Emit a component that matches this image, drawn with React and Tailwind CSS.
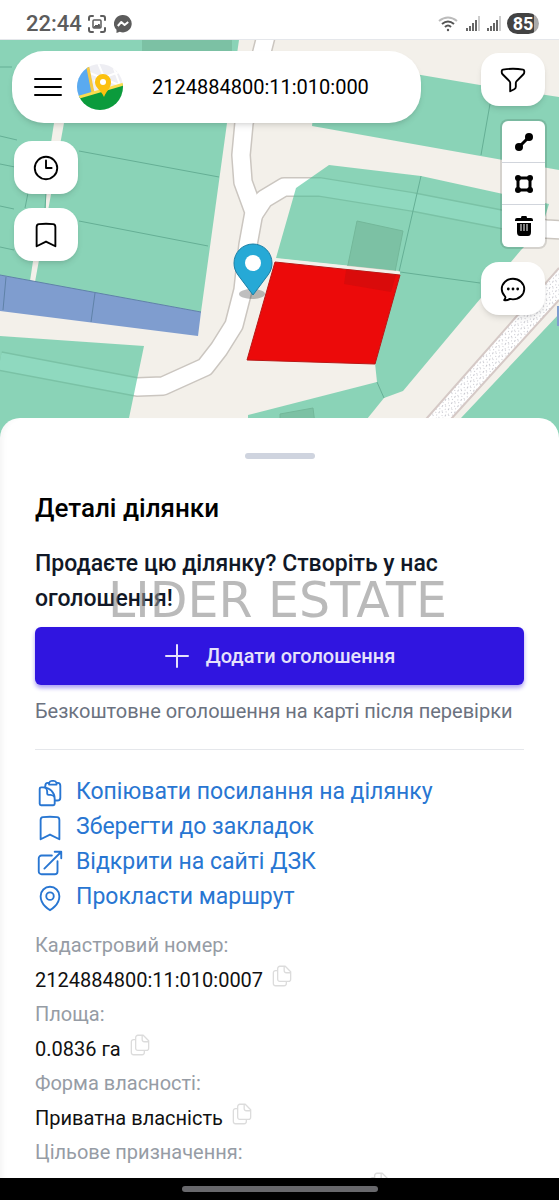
import React from 'react';
import {
    HiOutlineArrowTopRightOnSquare,
    HiOutlineBookmark,
    HiOutlineChatBubbleOvalLeftEllipsis,
    HiOutlineClipboardDocument,
    HiOutlineClock,
    HiOutlineFunnel,
    HiOutlineMapPin,
} from 'react-icons/hi2';

const links = [
    { icon: HiOutlineClipboardDocument, label: 'Копіювати посилання на ділянку' },
    { icon: HiOutlineBookmark, label: 'Зберегти до закладок' },
    { icon: HiOutlineArrowTopRightOnSquare, label: 'Відкрити на сайті ДЗК' },
    { icon: HiOutlineMapPin, label: 'Прокласти маршрут' },
];

const details = [
    { label: 'Кадастровий номер:', value: '2124884800:11:010:0007' },
    { label: 'Площа:', value: '0.0836 га' },
    { label: 'Форма власності:', value: 'Приватна власність' },
    { label: 'Цільове призначення:', value: '' },
];

const Signal = () => (
    <svg viewBox="0 0 14 15" className="w-[14px] h-[15px]" stroke="#666" strokeWidth="2">
        <path d="M1 15v-3M4 15v-5M7 15V7M10 15V4" />
        <path d="M13 15V0" stroke="#ccc" />
    </svg>
);

const StatusBar = () => (
    <header className="h-10 shrink-0 pt-2 pl-[26px] pr-5 flex items-center justify-between border-b border-gray-200 text-[#5c5c5c]">
        <div className="flex items-center">
            <span className="w-[62px] text-[22px] leading-6 font-medium">22:44</span>
            <svg viewBox="0 0 18 18" className="w-[18px] h-[18px]" fill="none" stroke="currentColor" strokeWidth="2" strokeLinecap="round">
                <path d="M1 5V3q0-2 2-2h2M13 1h2q2 0 2 2v2M17 13v2q0 2-2 2h-2M5 17H3q-2 0-2-2v-2" />
                <rect x="5" y="5" width="8" height="8" rx="1" strokeWidth="1.500" />
                <path d="M6 12l2-2 1 1 2-2 1 3z" fill="currentColor" strokeWidth="1" />
            </svg>
            <svg viewBox="0 0 18 18" className="w-[18px] h-[18px] ml-2">
                <path d="M9 0a8.700 8.700 0 1 1-3.200 16.800L2.500 18v-3.200A8.700 8.700 0 0 1 9 0z" fill="#5c5c5c" />
                <path d="M3.800 11l3.500-4 3.300 3 3.600-3" fill="none" stroke="#fff" strokeWidth="2" strokeLinejoin="round" />
            </svg>
        </div>
        <div className="flex items-center">
            <svg viewBox="0 0 20 16" className="w-5 h-4 mr-2" fill="none" stroke="#555" strokeWidth="2">
                <path d="M1 5q9-7 18 0" stroke="#bbb" />
                <path d="M4 8q6-5 12 0M7 11q3-3 6 0" />
                <circle cx="10" cy="14" r="1.200" fill="#555" stroke="none" />
            </svg>
            <Signal />
            <span className="w-[7px]" />
            <Signal />
            <span className="ml-[6px] w-8 h-[21px] rounded-full bg-[linear-gradient(to_right,#434343_85%,#aaa_85%)] text-white text-[18px] leading-[22px] font-bold text-center">
                85
            </span>
        </div>
    </header>
);

const ParcelMap = () => (
    <svg
        viewBox="0 40 559 410"
        preserveAspectRatio="xMidYMin slice"
        className="absolute inset-x-0 top-0 w-full h-[410px]"
        aria-hidden="true"
    >
        <defs>
            <pattern id="gravel" width="7" height="7" patternUnits="userSpaceOnUse" patternTransform="rotate(27)">
                <rect width="7" height="7" fill="#fff" />
                <path d="M1 1h1v1H1zM4 0h1v1H4zM3 3h1v1H3zM6 4h1v1H6zM0 5h1v1H0zM4 6h1v1H4z" fill="#c9c9d0" />
            </pattern>
        </defs>
        <rect y="40" width="559" height="410" fill="#f3f0ea" />

        {/* roads */}
        <g fill="none" strokeLinejoin="round">
            <g stroke="#cbc6c0" strokeWidth="20">
                <path d="M266 36L244 123 241 155 243 182 254 212 248 245 243 290 234 325 219 349 205 367 163 386 137 387 0 361" />
                <path d="M254 214L264 199 284 187 320 187 413 202 500 219 546 229 565 230" />
            </g>
            <g stroke="#fff" strokeWidth="17">
                <path d="M266 36L244 123 241 155 243 182 254 212 248 245 243 290 234 325 219 349 205 367 163 386 137 387 0 361" />
                <path d="M254 214L264 199 284 187 320 187 413 202 500 219 546 229 565 230" />
            </g>
        </g>
        <path d="M405 443L559 268V300L432 440Z" fill="url(#gravel)" />
        <path d="M405 443L559 268M432 440L559 300" fill="none" stroke="#d5c9c6" strokeWidth="2" />

        {/* buildings */}
        <g fill="#cfc4bb" stroke="#b8aaa2">
            <path d="M357 221L403 231 391 292 344 284Z" />
            <path d="M280 414L313 408 317 440H280Z" />
            <path d="M142 36H232V60H142Z" stroke="none" />
        </g>

        {/* parcels */}
        <g fill="#44c095" fillOpacity="0.6">
            <path d="M0 40H239L227 123 201 312 35 282 64 123H54L30 281 0 275Z" />
            <path d="M0 336L144 346 129 418 124 450H0Z" />
            <path d="M320 58L421 75 480 85 559 97V170L312 126Z" />
            <path d="M296 188L329 165 421 176 549 204 541 230 521 250 403 391 384 398 377 382 375 363 400 275 399 271 276 258Z" />
            <path d="M248 415L377 382 384 398 350 440H248Z" />
            <path d="M430 450L461 418 559 314V450Z" />
        </g>
        <path d="M27 193H46V208H27Z" fill="#8ad3b7" />
        <g fill="none" stroke="#65af95" strokeWidth="1">
            <path d="M79 151L219 177M79 221L208 246M0 136L17 140M0 164L15 167M0 206L14 209M0 247L14 250M0 67H12" />
            <path d="M28 193L25 208M46 193L45 208M490 104L481 155M421 176L399 272M400 272L480 283M377 382L384 398" />
        </g>
        <path d="M0 275L201 312 198 336 0 311Z" fill="#7f9dcf" />
        <path d="M0 275L201 312M6 277L3 310M95 293L91 322" fill="none" stroke="#5f82a8" />
        <path d="M557 306H559V326H557Z" fill="#7f9dcf" />
        <path d="M276 260L400 273" stroke="#f3f0ea" strokeWidth="3" />
        <path d="M275 262L400 275 375 364 247 360Z" fill="#ec0a0a" stroke="#b91816" strokeWidth="1" />
        <path d="M346 270L396 275 391 292 344 284Z" fill="#d90b0b" />

        {/* marker */}
        <ellipse cx="252" cy="294" rx="13" ry="5" fill="#000" opacity="0.25" />
        <path d="M253 295L238 275C235 271 234 267 234 263a19 19 0 0 1 38 0C272 267 271 271 268 275Z" fill="#26a9d6" stroke="#1c7fa5" strokeWidth="1" />
        <circle cx="253" cy="263" r="8" fill="#fff" />
    </svg>
);

const Logo = () => (
    <svg viewBox="0 0 48 48" className="w-12 h-12 shrink-0">
        <defs>
            <clipPath id="logo-clip">
                <circle cx="24" cy="24" r="23" />
            </clipPath>
        </defs>
        <g clipPath="url(#logo-clip)">
            <rect width="48" height="48" fill="#eeeef3" />
            <path d="M14 10L48 24M22 0L34 28M36 0L44 22M18 18L46 8" stroke="#fff" strokeWidth="2" />
            <path d="M0 0H12L18 30 0 36Z" fill="#5aaaf0" />
            <path d="M11 0L17 30" stroke="#f6c945" strokeWidth="3" />
            <path d="M0 35L48 21V48H0Z" fill="#0b9b3c" />
            <path d="M0 35L48 21" stroke="#fbdc4e" strokeWidth="3" />
            <path d="M28 34C25 27 19 25 19 19a8 8 0 0 1 16 0C35 25 31 27 28 34Z" fill="#fcc10f" />
            <circle cx="27" cy="19" r="3" fill="#fff" />
        </g>
    </svg>
);

const CopyIcon = () => (
    <svg viewBox="0 0 24 24" className="w-[26px] h-[26px]" fill="none" stroke="currentColor" strokeWidth="1.200" strokeLinejoin="round">
        <path d="M8 7H6a2 2 0 0 0-2 2v10a2 2 0 0 0 2 2h8a2 2 0 0 0 2-2v-2" />
        <path d="M8 5a2 2 0 0 1 2-2h5l5 5v7a2 2 0 0 1-2 2h-8a2 2 0 0 1-2-2Z" />
        <path d="M14 3v4a2 2 0 0 0 2 2h4" />
    </svg>
);

const MapButton = ({ icon: Icon, label }) => (
    <button
        type="button"
        aria-label={label}
        className="w-16 h-[53px] rounded-[18px] bg-white shadow-md flex items-center justify-center text-black"
    >
        <Icon className="w-[30px] h-[30px]" />
    </button>
);

const DrawTools = () => (
    <div className="w-[43px] rounded-md bg-white shadow-[0_0_0_2px_rgba(0,0,0,0.12)] flex flex-col divide-y divide-gray-300">
        <button type="button" aria-label="Лінія" className="h-[42px] flex items-center justify-center">
            <svg viewBox="0 0 20 20" className="w-5 h-5">
                <path d="M5 15L15 5" stroke="#000" strokeWidth="3" />
                <circle cx="5" cy="15" r="4" />
                <circle cx="15" cy="5" r="4" />
            </svg>
        </button>
        <button type="button" aria-label="Полігон" className="h-[42px] flex items-center justify-center">
            <svg viewBox="0 0 20 20" className="w-5 h-5">
                <path d="M4 4H16V16H4Z" fill="none" stroke="#000" strokeWidth="3" />
                <circle cx="4" cy="4" r="3" />
                <circle cx="16" cy="4" r="3" />
                <circle cx="4" cy="16" r="3" />
                <circle cx="16" cy="16" r="3" />
            </svg>
        </button>
        <button type="button" aria-label="Видалити" className="h-[42px] flex items-center justify-center">
            <svg viewBox="0 0 20 20" className="w-5 h-5">
                <path d="M1 4Q1 2 3 2H7Q7 0 8 0H12Q13 0 13 2H17Q19 2 19 4V5H1Z" />
                <path d="M3 7H17V16Q17 20 14 20H6Q3 20 3 16Z" />
                <path d="M7 8V15M10 8V15M13 8V15" stroke="#fff" strokeWidth="1" />
            </svg>
        </button>
    </div>
);

const MapControls = () => (
    <div className="relative h-[378px] pl-3 pr-[14px] pt-[11px] flex items-start">
        <div className="flex-1 min-w-0 mr-[60px]">
            <div className="h-[72px] pl-4 pr-5 rounded-[32px] bg-white shadow-md flex items-center">
                <button type="button" aria-label="Меню" className="shrink-0 pl-[6px] pr-[5px]">
                    <svg viewBox="0 0 28 20" className="w-7 h-5" stroke="#000" strokeWidth="2" strokeLinecap="round">
                        <path d="M1 2H27M1 10H27M1 18H27" />
                    </svg>
                </button>
                <span className="w-[9px] shrink-0" />
                <Logo />
                <input
                    type="text"
                    aria-label="Пошук ділянки"
                    defaultValue="2124884800:11:010:000"
                    className="ml-7 flex-1 min-w-0 h-10 text-xl text-black bg-transparent outline-none"
                />
            </div>
            <div className="pl-[2px] pt-[18px] flex flex-col gap-[14px]">
                <MapButton icon={HiOutlineClock} label="Історія" />
                <MapButton icon={HiOutlineBookmark} label="Закладки" />
            </div>
        </div>
        <div className="pt-[2px] flex flex-col items-end gap-[15px]">
            <MapButton icon={HiOutlineFunnel} label="Фільтр" />
            <DrawTools />
            <MapButton icon={HiOutlineChatBubbleOvalLeftEllipsis} label="Чат" />
        </div>
    </div>
);

const DetailsSheet = () => (
    <section className="relative flex-1 min-h-0 overflow-hidden rounded-t-[20px] bg-white px-[35px] pt-[35px] shadow-[inset_6px_0_6px_-4px_rgba(0,0,0,0.05)]">
        <div className="w-[70px] h-[6px] mx-auto rounded-full bg-[#cfd4df]" />
        <h1 className="mt-8 text-[26px] leading-[34px] font-medium text-black">Деталі ділянки</h1>
        <div className="relative mt-[21px]">
            <h2 className="text-[23px] leading-[35px] font-medium text-[#111827]">
                Продаєте цю ділянку? Створіть у нас оголошення!
            </h2>
            <span className="absolute left-[73px] top-[27px] whitespace-nowrap text-[49px] leading-[56px] text-[#8c8c8c]/60 font-['DejaVu_Sans',sans-serif]">
                LIDER ESTATE
            </span>
        </div>
        <button
            type="button"
            className="mt-[11px] w-full h-[58px] rounded-md bg-[#3015e0] shadow-[0_3px_4px_rgba(48,21,224,0.4)] flex items-center justify-center gap-4 text-xl font-medium text-[#e6e2fb]"
        >
            <svg viewBox="0 0 26 26" className="w-[26px] h-[26px]" stroke="currentColor" strokeWidth="2" strokeLinecap="round">
                <path d="M13 2V24M2 13H24" />
            </svg>
            Додати оголошення
        </button>
        <p className="mt-[9px] text-xl leading-[35px] whitespace-nowrap text-[#6b7280]">Безкоштовне оголошення на карті після перевірки</p>
        <hr className="mt-5 border-gray-200" />
        <nav className="mt-[25px] flex flex-col items-start">
            {links.map(({ icon: Icon, label }) => (
                <a key={label} href="#" className="h-[35px] flex items-center gap-[11px] text-[23px] text-[#2876d2]">
                    <Icon className="w-[30px] h-[30px] shrink-0" />
                    {label}
                </a>
            ))}
        </nav>
        <dl className="mt-[13px] text-xl leading-[35px]">
            {details.map(({ label, value }) => (
                <div key={label} className="h-[69px]">
                    <dt className="text-[#969ca5]">{label}</dt>
                    <dd className="h-[34px] flex items-start text-[#111]">
                        {value || <span className="w-[325px]" />}
                        <button type="button" aria-label="Копіювати" className="ml-[6px] text-[#dcdcdc]">
                            <CopyIcon />
                        </button>
                    </dd>
                </div>
            ))}
        </dl>
    </section>
);

const App = () => {
    return (
        <div className="h-screen flex flex-col overflow-hidden bg-white font-['Roboto',sans-serif]">
            <StatusBar />
            <main className="relative flex-1 min-h-0 flex flex-col">
                <ParcelMap />
                <MapControls />
                <DetailsSheet />
            </main>
            <footer className="h-[22px] shrink-0 bg-black flex items-center justify-center">
                <div className="w-[196px] h-[6px] rounded-full bg-[#68686c]" />
            </footer>
        </div>
    );
};

export default App;
